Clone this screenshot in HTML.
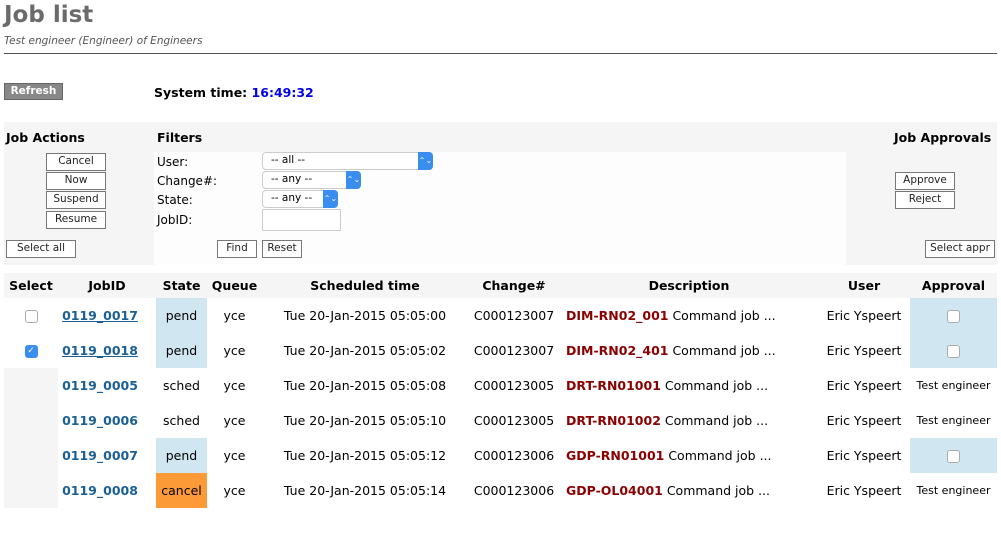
<!DOCTYPE html>
<html><head><meta charset="utf-8"><style>
body{margin:0;background:#fff;font-family:"DejaVu Sans","Liberation Sans",sans-serif;font-size:12px;color:#000;position:relative;width:1001px;height:535px;overflow:hidden}
.a{position:absolute;white-space:nowrap}
.btn{position:absolute;border:1px solid #777;background:#fff;font-size:10.5px;text-align:center;box-sizing:border-box;line-height:15px;color:#222}
.sel{position:absolute;border:1px solid #ccc;border-radius:4px;background:#fff;box-sizing:border-box;font-size:10.5px;line-height:15px;padding-left:8px}
.sel i{position:absolute;right:-1px;top:-1px;bottom:-1px;width:15px;background:#3a8ef0;border-radius:0 4px 4px 0;color:#fff;font-style:normal;font-size:8px;text-align:center;line-height:17px}
table{position:absolute;left:4px;top:273px;width:993px;border-collapse:collapse;font-size:12.5px;table-layout:fixed}
td,th{padding:0;height:35px;text-align:center;white-space:nowrap;overflow:hidden}
th{height:25px;background:#f5f5f5;font-size:12.5px}
.id{color:#1a5f96;font-weight:bold;font-size:12.5px;padding-right:14px}
.u{text-decoration:underline}
.b{background:#d0e6f0}
.g{background:#f5f5f5}
.o{background:#fc9a38}
.d{color:#8b0000;font-weight:bold}
.cb{display:inline-block;width:11px;height:11px;border:1px solid #aaa;border-radius:3px;background:#fff;vertical-align:middle}
.cbc{background:#3a8ef0;border-color:#3a8ef0;color:#fff;font-size:9px;line-height:11px}
.te{font-size:11px}
.ds{text-align:left;padding-left:6px}
</style></head><body>
<div class="a" style="left:4px;top:2px;font-size:23px;font-weight:bold;color:#6b6b6b">Job list</div>
<div class="a" style="left:4px;top:35px;font-size:10.5px;font-style:italic;color:#555">Test engineer (Engineer) of Engineers</div>
<div class="a" style="left:4px;top:53px;width:993px;height:1px;background:#555"></div>
<div class="a" style="left:4px;top:83px;width:59px;height:17px;background:#888;border:1px solid #666;box-sizing:border-box;color:#fff;font-weight:bold;font-size:10.5px;text-align:center;line-height:15px">Refresh</div>
<div class="a" style="left:154px;top:85px;font-weight:bold;font-size:12.5px">System time: <span style="color:#0000ee">16:49:32</span></div>
<div class="a" style="left:4px;top:122px;width:993px;height:143px;background:#f5f5f5"></div>
<div class="a" style="left:154px;top:152px;width:692px;height:113px;background:#fdfdfd"></div>
<div class="a" style="left:6px;top:130px;font-weight:bold;font-size:12.5px">Job Actions</div>
<div class="a" style="left:157px;top:130px;font-weight:bold;font-size:12.5px">Filters</div>
<div class="a" style="left:894px;top:130px;font-weight:bold;font-size:12.5px">Job Approvals</div>
<div class="btn" style="left:46px;top:153px;width:60px;height:18px">Cancel</div>
<div class="btn" style="left:46px;top:172px;width:60px;height:18px">Now</div>
<div class="btn" style="left:46px;top:191px;width:60px;height:18px">Suspend</div>
<div class="btn" style="left:46px;top:211px;width:60px;height:18px">Resume</div>
<div class="btn" style="left:6px;top:240px;width:70px;height:18px">Select all</div>
<div class="a" style="left:157px;top:155px">User:</div>
<div class="a" style="left:157px;top:174px">Change#:</div>
<div class="a" style="left:157px;top:193px">State:</div>
<div class="a" style="left:157px;top:213px">JobID:</div>
<div class="sel" style="left:262px;top:152px;width:171px;height:18px">-- all --<i>⌃⌄</i></div>
<div class="sel" style="left:262px;top:171px;width:99px;height:18px">-- any --<i>⌃⌄</i></div>
<div class="sel" style="left:262px;top:190px;width:76px;height:18px">-- any --<i>⌃⌄</i></div>
<div class="a" style="left:262px;top:209px;width:79px;height:22px;border:1px solid #ccc;box-sizing:border-box;background:#fff"></div>
<div class="btn" style="left:217px;top:240px;width:40px;height:18px">Find</div>
<div class="btn" style="left:262px;top:240px;width:40px;height:18px">Reset</div>
<div class="btn" style="left:895px;top:172px;width:60px;height:18px">Approve</div>
<div class="btn" style="left:895px;top:191px;width:60px;height:18px">Reject</div>
<div class="btn" style="left:925px;top:240px;width:70px;height:18px">Select appr</div>
<table>
<colgroup><col style="width:54px"><col style="width:98px"><col style="width:51px"><col style="width:55px"><col style="width:206px"><col style="width:92px"><col style="width:258px"><col style="width:92px"><col style="width:87px"></colgroup>
<tr><th>Select</th><th>JobID</th><th>State</th><th>Queue</th><th>Scheduled time</th><th>Change#</th><th>Description</th><th>User</th><th>Approval</th></tr>
<tr><td><span class="cb"></span></td><td class="id u">0119_0017</td><td class="b">pend</td><td>yce</td><td>Tue 20-Jan-2015 05:05:00</td><td>C000123007</td><td class="ds"><span class="d">DIM-RN02_001</span> Command job ...</td><td>Eric Yspeert</td><td class="b"><span class="cb"></span></td></tr>
<tr><td><span class="cb cbc">✓</span></td><td class="id u">0119_0018</td><td class="b">pend</td><td>yce</td><td>Tue 20-Jan-2015 05:05:02</td><td>C000123007</td><td class="ds"><span class="d">DIM-RN02_401</span> Command job ...</td><td>Eric Yspeert</td><td class="b"><span class="cb"></span></td></tr>
<tr><td class="g"></td><td class="id">0119_0005</td><td>sched</td><td>yce</td><td>Tue 20-Jan-2015 05:05:08</td><td>C000123005</td><td class="ds"><span class="d">DRT-RN01001</span> Command job ...</td><td>Eric Yspeert</td><td class="te">Test engineer</td></tr>
<tr><td class="g"></td><td class="id">0119_0006</td><td>sched</td><td>yce</td><td>Tue 20-Jan-2015 05:05:10</td><td>C000123005</td><td class="ds"><span class="d">DRT-RN01002</span> Command job ...</td><td>Eric Yspeert</td><td class="te">Test engineer</td></tr>
<tr><td class="g"></td><td class="id">0119_0007</td><td class="b">pend</td><td>yce</td><td>Tue 20-Jan-2015 05:05:12</td><td>C000123006</td><td class="ds"><span class="d">GDP-RN01001</span> Command job ...</td><td>Eric Yspeert</td><td class="b"><span class="cb"></span></td></tr>
<tr><td class="g"></td><td class="id">0119_0008</td><td class="o">cancel</td><td>yce</td><td>Tue 20-Jan-2015 05:05:14</td><td>C000123006</td><td class="ds"><span class="d">GDP-OL04001</span> Command job ...</td><td>Eric Yspeert</td><td class="te">Test engineer</td></tr>
</table>
</body></html>
